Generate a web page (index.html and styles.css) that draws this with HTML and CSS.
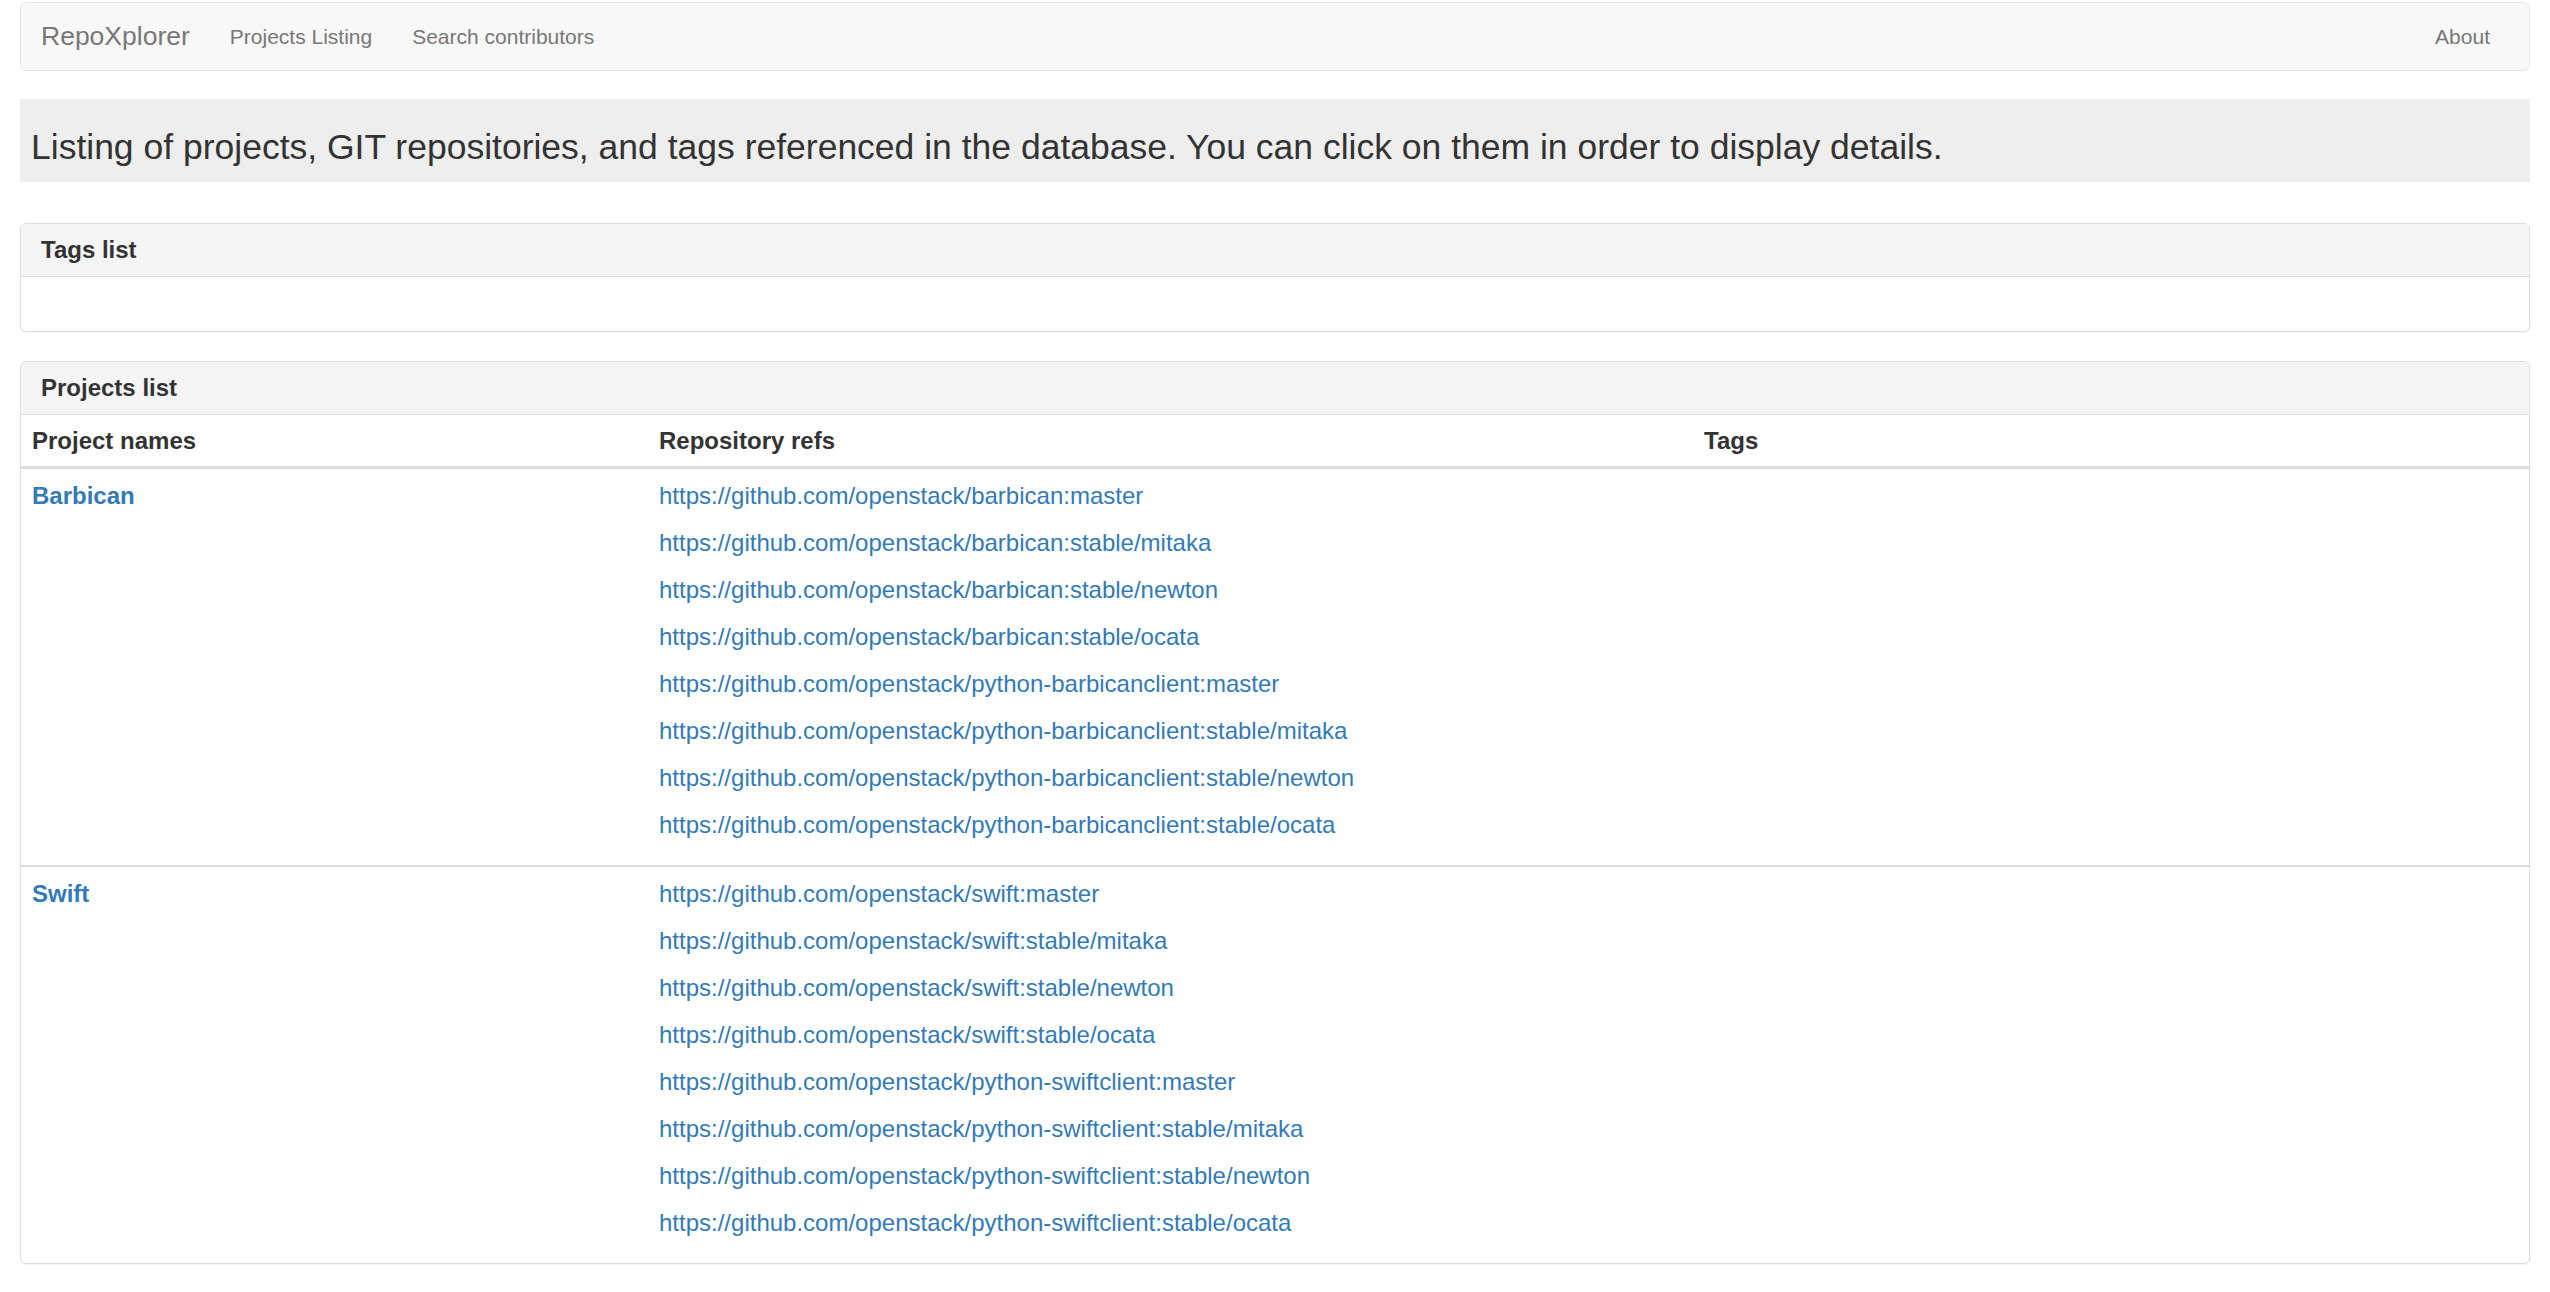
FILE: index.html
```html
<!DOCTYPE html>
<html lang="en">
<head>
<meta charset="utf-8">
<title>RepoXplorer - Projects Listing</title>
<link rel="stylesheet" href="styles.css">
</head>
<body>
<div class="page">
  <nav class="navbar">
    <a class="brand" href="#">RepoXplorer</a>
    <a class="nav-link" href="#">Projects Listing</a>
    <a class="nav-link" href="#">Search contributors</a>
    <div class="nav-right">
      <a class="nav-link" href="#">About</a>
    </div>
  </nav>

  <div class="jumbotron">
    <p class="lead">Listing of projects, GIT repositories, and tags referenced in the database. You can click on them in order to display details.</p>
  </div>

  <div class="panel">
    <div class="panel-heading">Tags list</div>
    <div class="panel-body"></div>
  </div>

  <div class="panel">
    <div class="panel-heading">Projects list</div>
    <table class="table">
      <colgroup>
        <col class="col-name">
        <col class="col-refs">
        <col class="col-tags">
      </colgroup>
      <thead>
        <tr>
          <th>Project names</th>
          <th>Repository refs</th>
          <th>Tags</th>
        </tr>
      </thead>
      <tbody>
        <tr>
          <td><a class="project" href="#">Barbican</a></td>
          <td>
            <a class="ref" href="#">https://github.com/openstack/barbican:master</a>
            <a class="ref" href="#">https://github.com/openstack/barbican:stable/mitaka</a>
            <a class="ref" href="#">https://github.com/openstack/barbican:stable/newton</a>
            <a class="ref" href="#">https://github.com/openstack/barbican:stable/ocata</a>
            <a class="ref" href="#">https://github.com/openstack/python-barbicanclient:master</a>
            <a class="ref" href="#">https://github.com/openstack/python-barbicanclient:stable/mitaka</a>
            <a class="ref" href="#">https://github.com/openstack/python-barbicanclient:stable/newton</a>
            <a class="ref" href="#">https://github.com/openstack/python-barbicanclient:stable/ocata</a>
          </td>
          <td></td>
        </tr>
        <tr>
          <td><a class="project" href="#">Swift</a></td>
          <td>
            <a class="ref" href="#">https://github.com/openstack/swift:master</a>
            <a class="ref" href="#">https://github.com/openstack/swift:stable/mitaka</a>
            <a class="ref" href="#">https://github.com/openstack/swift:stable/newton</a>
            <a class="ref" href="#">https://github.com/openstack/swift:stable/ocata</a>
            <a class="ref" href="#">https://github.com/openstack/python-swiftclient:master</a>
            <a class="ref" href="#">https://github.com/openstack/python-swiftclient:stable/mitaka</a>
            <a class="ref" href="#">https://github.com/openstack/python-swiftclient:stable/newton</a>
            <a class="ref" href="#">https://github.com/openstack/python-swiftclient:stable/ocata</a>
          </td>
          <td></td>
        </tr>
      </tbody>
    </table>
  </div>
</div>
</body>
</html>
```
FILE: styles.css
```css
* {
  box-sizing: border-box;
}

body {
  margin: 0;
  font-family: "Liberation Sans", Arial, Helvetica, sans-serif;
  color: #333;
  background: #fff;
}

a {
  text-decoration: none;
}

.page {
  padding: 2px 20px 20px;
}

/* Navbar */
.navbar {
  display: flex;
  align-items: center;
  height: 69px;
  background: #f8f8f8;
  border: 1px solid #e7e7e7;
  border-radius: 6px;
  margin-bottom: 28px;
}

.brand {
  font-size: 26.5px;
  color: #777;
  padding: 0 20px;
}

.nav-link {
  font-size: 21px;
  color: #777;
  padding: 0 20px;
}

.nav-right {
  margin-left: auto;
  padding-right: 19px;
}

/* Jumbotron */
.jumbotron {
  background: #eee;
  padding: 24px 11px 10px;
  margin-bottom: 41px;
}

.lead {
  margin: 0;
  font-size: 35.5px;
  line-height: 49px;
  color: #333;
}

/* Panels */
.panel {
  border: 1px solid #ddd;
  border-radius: 6px;
  margin-bottom: 29px;
  overflow: hidden;
  background: #fff;
  box-shadow: 0 1px 1px rgba(0, 0, 0, 0.05);
}

.panel-heading {
  background: #f5f5f5;
  border-bottom: 1px solid #ddd;
  padding: 10px 20px;
  font-size: 24px;
  font-weight: bold;
  line-height: 32px;
}

.panel-body {
  padding: 27px 20px;
}

/* Table */
.table {
  width: 100%;
  border-collapse: collapse;
  table-layout: fixed;
  font-size: 24px;
  line-height: 33px;
}

.col-name {
  width: 25%;
}

.col-refs {
  width: 41.667%;
}

.col-tags {
  width: 33.333%;
}

.table th {
  text-align: left;
  font-weight: bold;
  padding: 9px 11px;
  border-bottom: 3px solid #ddd;
}

.table td {
  vertical-align: top;
  padding: 10px 11px;
}

.table tbody tr + tr td {
  border-top: 2px solid #ddd;
}

.project {
  font-weight: bold;
  color: #337ab7;
}

.ref {
  display: block;
  color: #337ab7;
  margin-bottom: 14px;
}
```
